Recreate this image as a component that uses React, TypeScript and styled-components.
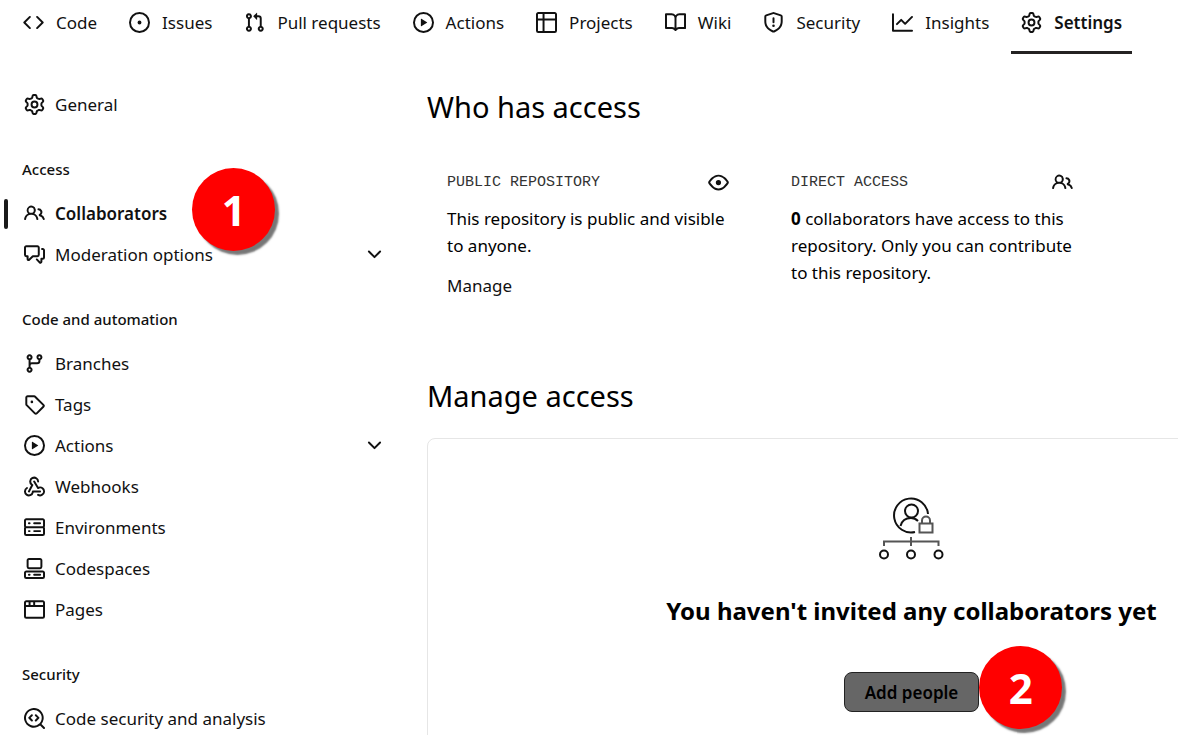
import React from "react";
import styled, { createGlobalStyle } from "styled-components";

const GlobalStyle = createGlobalStyle`
  *, *::before, *::after { box-sizing: border-box; }
  body {
    margin: 0;
    background: #ffffff;
    color: #111111;
    font-family: "Noto Sans", "Open Sans", sans-serif;
    font-size: 17px;
    line-height: 27px;
  }
  h2, h3, p, ul { margin: 0; padding: 0; }
  ul { list-style: none; }
  a { color: inherit; text-decoration: none; }
`;

const icons = {
  code: "m11.28 3.22 4.25 4.25a.75.75 0 0 1 0 1.06l-4.25 4.25a.749.749 0 0 1-1.275-.326.749.749 0 0 1 .215-.734L13.94 8l-3.72-3.72a.749.749 0 0 1 .326-1.275.749.749 0 0 1 .734.215Zm-6.56 0a.751.751 0 0 1 1.042.018.751.751 0 0 1 .018 1.042L2.06 8l3.72 3.72a.749.749 0 0 1-.326 1.275.749.749 0 0 1-.734-.215L.47 8.53a.75.75 0 0 1 0-1.06Z",
  issue: "M8 9.5a1.5 1.5 0 1 0 0-3 1.5 1.5 0 0 0 0 3ZM8 0a8 8 0 1 1 0 16A8 8 0 0 1 8 0ZM1.5 8a6.5 6.5 0 1 0 13 0 6.5 6.5 0 0 0-13 0Z",
  pull: "M1.5 3.25a2.25 2.25 0 1 1 3 2.122v5.256a2.251 2.251 0 1 1-1.5 0V5.372A2.25 2.25 0 0 1 1.5 3.25Zm5.677-.177L9.573.677A.25.25 0 0 1 10 .854V2.5h1A2.5 2.5 0 0 1 13.5 5v5.628a2.251 2.251 0 1 1-1.5 0V5a1 1 0 0 0-1-1h-1v1.646a.25.25 0 0 1-.427.177L7.177 3.427a.25.25 0 0 1 0-.354ZM3.75 2.5a.75.75 0 1 0 0 1.5.75.75 0 0 0 0-1.5Zm0 9.5a.75.75 0 1 0 0 1.5.75.75 0 0 0 0-1.5Zm8.25.75a.75.75 0 1 0 1.5 0 .75.75 0 0 0-1.5 0Z",
  play: "M8 0a8 8 0 1 1 0 16A8 8 0 0 1 8 0ZM1.5 8a6.5 6.5 0 1 0 13 0 6.5 6.5 0 0 0-13 0Zm4.879-2.773 4.264 2.559a.25.25 0 0 1 0 .428l-4.264 2.559A.25.25 0 0 1 6 10.559V5.442a.25.25 0 0 1 .379-.215Z",
  table: "M0 1.75C0 .784.784 0 1.75 0h12.5C15.216 0 16 .784 16 1.75v12.5A1.75 1.75 0 0 1 14.25 16H1.75A1.75 1.75 0 0 1 0 14.25ZM6.5 6.5v8h7.75a.25.25 0 0 0 .25-.25V6.5Zm8-1.5V1.75a.25.25 0 0 0-.25-.25H6.5V5Zm-13 1.5v7.75c0 .138.112.25.25.25H5v-8ZM5 5V1.5H1.75a.25.25 0 0 0-.25.25V5Z",
  book: "M0 1.75A.75.75 0 0 1 .75 1h4.253c1.227 0 2.317.59 3 1.501A3.743 3.743 0 0 1 11.006 1h4.245a.75.75 0 0 1 .75.75v10.5a.75.75 0 0 1-.75.75h-4.507a2.25 2.25 0 0 0-1.591.659l-.622.621a.75.75 0 0 1-1.06 0l-.622-.621A2.25 2.25 0 0 0 5.258 13H.75a.75.75 0 0 1-.75-.75Zm7.251 10.324.004-5.073-.002-2.253A2.25 2.25 0 0 0 5.003 2.5H1.5v9h3.757a3.75 3.75 0 0 1 1.994.574ZM8.755 4.75l-.004 7.322a3.752 3.752 0 0 1 1.992-.572H14.5v-9h-3.495a2.25 2.25 0 0 0-2.25 2.25Z",
  shield: "M7.467.133a1.748 1.748 0 0 1 1.066 0l5.25 1.68A1.75 1.75 0 0 1 15 3.48V7c0 1.566-.32 3.182-1.303 4.682-.983 1.498-2.585 2.813-5.032 3.855a1.697 1.697 0 0 1-1.33 0c-2.447-1.042-4.049-2.357-5.032-3.855C1.32 10.182 1 8.566 1 7V3.48a1.75 1.75 0 0 1 1.217-1.667Zm.61 1.429a.25.25 0 0 0-.153 0l-5.25 1.68a.25.25 0 0 0-.174.238V7c0 1.358.275 2.666 1.057 3.86.784 1.194 2.121 2.34 4.366 3.297a.196.196 0 0 0 .154 0c2.245-.956 3.582-2.104 4.366-3.298C13.225 9.666 13.5 8.36 13.5 7V3.48a.251.251 0 0 0-.174-.237l-5.25-1.68ZM8.75 4.75v3a.75.75 0 0 1-1.5 0v-3a.75.75 0 0 1 1.5 0ZM9 10.5a1 1 0 1 1-2 0 1 1 0 0 1 2 0Z",
  graph: "M1.5 1.75V13.5h13.75a.75.75 0 0 1 0 1.5H.75a.75.75 0 0 1-.75-.75V1.75a.75.75 0 0 1 1.5 0Zm14.28 2.53-5.25 5.25a.75.75 0 0 1-1.06 0L7 7.06 4.28 9.78a.751.751 0 0 1-1.042-.018.751.751 0 0 1-.018-1.042l3.25-3.25a.75.75 0 0 1 1.06 0L10 7.94l4.72-4.72a.751.751 0 0 1 1.042.018.751.751 0 0 1 .018 1.042Z",
  gear: "M8 0a8.2 8.2 0 0 1 .701.031C9.444.095 9.99.645 10.16 1.29l.288 1.107c.018.066.079.158.212.224.231.114.454.243.668.386.123.082.233.09.299.071l1.103-.303c.644-.176 1.392.021 1.82.63.27.385.506.792.704 1.218.315.675.111 1.422-.364 1.891l-.814.806c-.049.048-.098.147-.088.294.016.257.016.515 0 .772-.01.147.038.246.088.294l.814.806c.475.469.679 1.216.364 1.891a7.977 7.977 0 0 1-.704 1.217c-.428.61-1.176.807-1.82.63l-1.102-.302c-.067-.019-.177-.011-.3.071a5.909 5.909 0 0 1-.668.386c-.133.066-.194.158-.211.224l-.29 1.106c-.168.646-.715 1.196-1.458 1.26a8.006 8.006 0 0 1-1.402 0c-.743-.064-1.289-.614-1.458-1.26l-.289-1.106c-.018-.066-.079-.158-.212-.224a5.738 5.738 0 0 1-.668-.386c-.123-.082-.233-.09-.299-.071l-1.103.303c-.644.176-1.392-.021-1.82-.63a8.12 8.12 0 0 1-.704-1.218c-.315-.675-.111-1.422.363-1.891l.815-.806c.05-.048.098-.147.088-.294a6.214 6.214 0 0 1 0-.772c.01-.147-.038-.246-.088-.294l-.815-.806C.635 6.045.431 5.298.746 4.623a7.92 7.92 0 0 1 .704-1.217c.428-.61 1.176-.807 1.82-.63l1.102.302c.067.019.177.011.3-.071.214-.143.437-.272.668-.386.133-.066.194-.158.211-.224l.29-1.106C6.009.645 6.556.095 7.299.03 7.53.01 7.764 0 8 0Zm-.571 1.525c-.036.003-.108.036-.137.146l-.289 1.105c-.147.561-.549.967-.998 1.189-.173.086-.34.183-.5.29-.417.278-.97.423-1.529.27l-1.103-.303c-.109-.03-.175.016-.195.045-.22.312-.412.644-.573.99-.014.031-.021.11.059.19l.815.806c.411.406.562.957.53 1.456a4.709 4.709 0 0 0 0 .582c.032.499-.119 1.05-.53 1.456l-.815.806c-.081.08-.073.159-.059.19.162.346.353.677.573.989.02.03.085.076.195.046l1.102-.303c.56-.153 1.113-.008 1.53.27.161.107.328.204.501.29.447.222.85.629.997 1.189l.289 1.105c.029.109.101.143.137.146a6.6 6.6 0 0 0 1.142 0c.036-.003.108-.036.137-.146l.289-1.105c.147-.561.549-.967.998-1.189.173-.086.34-.183.5-.29.417-.278.97-.423 1.529-.27l1.103.303c.109.029.175-.016.195-.045.22-.313.411-.644.573-.99.014-.031.021-.11-.059-.19l-.815-.806c-.411-.406-.562-.957-.53-1.456a4.709 4.709 0 0 0 0-.582c-.032-.499.119-1.05.53-1.456l.815-.806c.081-.08.073-.159.059-.19a6.464 6.464 0 0 0-.573-.989c-.02-.03-.085-.076-.195-.046l-1.102.303c-.56.153-1.113.008-1.53-.27a4.44 4.44 0 0 0-.501-.29c-.447-.222-.85-.629-.997-1.189l-.289-1.105c-.029-.11-.101-.143-.137-.146a6.6 6.6 0 0 0-1.142 0ZM11 8a3 3 0 1 1-6 0 3 3 0 0 1 6 0ZM9.5 8a1.5 1.5 0 1 0-3.001.001A1.5 1.5 0 0 0 9.5 8Z",
  people: "M2 5.5a3.5 3.5 0 1 1 5.898 2.549 5.508 5.508 0 0 1 3.034 4.084.75.75 0 1 1-1.482.235 4 4 0 0 0-7.9 0 .75.75 0 0 1-1.482-.236A5.507 5.507 0 0 1 3.102 8.05 3.493 3.493 0 0 1 2 5.5ZM11 4a3.001 3.001 0 0 1 2.22 5.018 5.01 5.01 0 0 1 2.56 3.012.749.749 0 0 1-.885.954.752.752 0 0 1-.549-.514 3.507 3.507 0 0 0-2.522-2.372.75.75 0 0 1-.574-.73v-.352a.75.75 0 0 1 .416-.672A1.5 1.5 0 0 0 11 5.5.75.75 0 0 1 11 4Zm-5.5-.5a2 2 0 1 0-.001 3.999A2 2 0 0 0 5.5 3.5Z",
  discussion: "M1.75 1h8.5c.966 0 1.75.784 1.75 1.75v5.5A1.75 1.75 0 0 1 10.25 10H7.061l-2.574 2.573A1.458 1.458 0 0 1 2 11.543V10h-.25A1.75 1.75 0 0 1 0 8.25v-5.5C0 1.784.784 1 1.75 1ZM1.5 2.75v5.5c0 .138.112.25.25.25h1a.75.75 0 0 1 .75.75v2.19l2.72-2.72a.749.749 0 0 1 .53-.22h3.5a.25.25 0 0 0 .25-.25v-5.5a.25.25 0 0 0-.25-.25h-8.5a.25.25 0 0 0-.25.25Zm13 2a.25.25 0 0 0-.25-.25h-.5a.75.75 0 0 1 0-1.5h.5c.966 0 1.75.784 1.75 1.75v5.5A1.75 1.75 0 0 1 14.25 12H14v1.543a1.458 1.458 0 0 1-2.487 1.03L9.22 12.28a.749.749 0 0 1 .326-1.275.749.749 0 0 1 .734.215l2.22 2.22v-2.19a.75.75 0 0 1 .75-.75h1a.25.25 0 0 0 .25-.25Z",
  branch: "M9.5 3.25a2.25 2.25 0 1 1 3 2.122V6A2.5 2.5 0 0 1 10 8.5H6a1 1 0 0 0-1 1v1.128a2.251 2.251 0 1 1-1.5 0V5.372a2.25 2.25 0 1 1 1.5 0v1.836A2.493 2.493 0 0 1 6 7h4a1 1 0 0 0 1-1v-.628A2.25 2.25 0 0 1 9.5 3.25Zm-6 0a.75.75 0 1 0 1.5 0 .75.75 0 0 0-1.5 0Zm8.25-.75a.75.75 0 1 0 0 1.5.75.75 0 0 0 0-1.5ZM4.25 12a.75.75 0 1 0 0 1.5.75.75 0 0 0 0-1.5Z",
  tag: "M1 7.775V2.75C1 1.784 1.784 1 2.75 1h5.025c.464 0 .91.184 1.238.513l6.25 6.25a1.75 1.75 0 0 1 0 2.474l-5.026 5.026a1.75 1.75 0 0 1-2.474 0l-6.25-6.25A1.752 1.752 0 0 1 1 7.775Zm1.5 0c0 .066.026.13.073.177l6.25 6.25a.25.25 0 0 0 .354 0l5.025-5.025a.25.25 0 0 0 0-.354l-6.25-6.25a.25.25 0 0 0-.177-.073H2.75a.25.25 0 0 0-.25.25ZM6 5a1 1 0 1 1 0 2 1 1 0 0 1 0-2Z",
  webhook: "M5.5 4.25a2.25 2.25 0 0 1 4.5 0 .75.75 0 0 0 1.5 0 3.75 3.75 0 1 0-6.14 2.889l-2.272 4.258a.75.75 0 0 0 1.324.706L7 7.25a.75.75 0 0 0-.309-1.015A2.25 2.25 0 0 1 5.5 4.25ZM7.364 3.607a.75.75 0 0 1 1.03.257l2.608 4.349a3.75 3.75 0 1 1-.628 6.785.75.75 0 0 1 .752-1.299 2.25 2.25 0 1 0-.033-3.88.75.75 0 0 1-1.03-.256L7.107 4.636a.75.75 0 0 1 .257-1.03ZM2.9 8.776A.75.75 0 0 1 2.625 9.8 2.25 2.25 0 1 0 6 11.75a.75.75 0 0 1 .75-.751h5.5a.75.75 0 0 1 0 1.5H7.425a3.751 3.751 0 1 1-5.55-3.998.75.75 0 0 1 1.024.274Z",
  server: "M1.75 1h12.5c.966 0 1.75.784 1.75 1.75v4c0 .372-.116.717-.314 1 .198.283.314.628.314 1v4a1.75 1.75 0 0 1-1.75 1.75H1.75A1.75 1.75 0 0 1 0 12.75v-4c0-.358.109-.707.314-1a1.739 1.739 0 0 1-.314-1v-4C0 1.784.784 1 1.75 1ZM1.5 2.75v4c0 .138.112.25.25.25h12.5a.25.25 0 0 0 .25-.25v-4a.25.25 0 0 0-.25-.25H1.75a.25.25 0 0 0-.25.25Zm.25 5.75a.25.25 0 0 0-.25.25v4c0 .138.112.25.25.25h12.5a.25.25 0 0 0 .25-.25v-4a.25.25 0 0 0-.25-.25ZM7 4.75A.75.75 0 0 1 7.75 4h4.5a.75.75 0 0 1 0 1.5h-4.5A.75.75 0 0 1 7 4.75ZM7.75 10h4.5a.75.75 0 0 1 0 1.5h-4.5a.75.75 0 0 1 0-1.5ZM3 4.75A.75.75 0 0 1 3.75 4h.5a.75.75 0 0 1 0 1.5h-.5A.75.75 0 0 1 3 4.75ZM3.75 10h.5a.75.75 0 0 1 0 1.5h-.5a.75.75 0 0 1 0-1.5Z",
  codespaces: "M0 11.25c0-.966.784-1.75 1.75-1.75h12.5c.966 0 1.75.784 1.75 1.75v3A1.75 1.75 0 0 1 14.25 16H1.75A1.75 1.75 0 0 1 0 14.25Zm2-9.5C2 .784 2.784 0 3.75 0h8.5C13.216 0 14 .784 14 1.75v5a1.75 1.75 0 0 1-1.75 1.75h-8.5A1.75 1.75 0 0 1 2 6.75Zm1.75-.25a.25.25 0 0 0-.25.25v5c0 .138.112.25.25.25h8.5a.25.25 0 0 0 .25-.25v-5a.25.25 0 0 0-.25-.25Zm-2 9.5a.25.25 0 0 0-.25.25v3c0 .138.112.25.25.25h12.5a.25.25 0 0 0 .25-.25v-3a.25.25 0 0 0-.25-.25ZM7 12.75a.75.75 0 0 1 .75-.75h4.5a.75.75 0 0 1 0 1.5h-4.5a.75.75 0 0 1-.75-.75Zm-4 0a.75.75 0 0 1 .75-.75h.5a.75.75 0 0 1 0 1.5h-.5a.75.75 0 0 1-.75-.75Z",
  browser: "M0 2.75C0 1.784.784 1 1.75 1h12.5c.966 0 1.75.784 1.75 1.75v10.5A1.75 1.75 0 0 1 14.25 15H1.75A1.75 1.75 0 0 1 0 13.25ZM14.5 6h-13v7.25c0 .138.112.25.25.25h12.5a.25.25 0 0 0 .25-.25Zm-6-3.5v2h6V2.75a.25.25 0 0 0-.25-.25ZM5 2.5v2h2v-2Zm-3.25 0a.25.25 0 0 0-.25.25V4.5h2v-2Z",
  codescan: "M8.47 4.97a.75.75 0 0 0 0 1.06L9.94 7.5 8.47 8.97a.75.75 0 1 0 1.06 1.06l2-2a.75.75 0 0 0 0-1.06l-2-2a.75.75 0 0 0-1.06 0ZM6.53 6.03a.75.75 0 0 0-1.06-1.06l-2 2a.75.75 0 0 0 0 1.06l2 2a.75.75 0 1 0 1.06-1.06L5.06 7.5l1.47-1.47ZM12.246 13.307a7.501 7.501 0 1 1 1.06-1.06l2.474 2.473a.749.749 0 0 1-.326 1.275.749.749 0 0 1-.734-.215ZM1.5 7.5a6.002 6.002 0 0 0 3.608 5.504 6.002 6.002 0 0 0 6.486-1.117.748.748 0 0 1 .292-.293A6 6 0 1 0 1.5 7.5Z",
  chevron: "M12.78 5.22a.749.749 0 0 1 0 1.06l-4.25 4.25a.749.749 0 0 1-1.06 0L3.22 6.28a.749.749 0 1 1 1.06-1.06L8 8.939l3.72-3.719a.749.749 0 0 1 1.06 0Z",
  eye: "M8 2c1.981 0 3.671.992 4.933 2.078 1.27 1.091 2.187 2.345 2.637 3.023a1.62 1.62 0 0 1 0 1.798c-.45.678-1.367 1.932-2.637 3.023C11.67 13.008 9.981 14 8 14c-1.981 0-3.671-.992-4.933-2.078C1.797 10.83.88 9.576.43 8.898a1.62 1.62 0 0 1 0-1.798c.45-.677 1.367-1.931 2.637-3.022C4.33 2.992 6.019 2 8 2ZM1.679 7.932a.12.12 0 0 0 0 .136c.411.622 1.241 1.75 2.366 2.717C5.176 11.758 6.527 12.5 8 12.5c1.473 0 2.825-.742 3.955-1.715 1.124-.967 1.954-2.096 2.366-2.717a.12.12 0 0 0 0-.136c-.412-.621-1.242-1.75-2.366-2.717C10.824 4.242 9.473 3.5 8 3.5c-1.473 0-2.825.742-3.955 1.715-1.124.967-1.954 2.096-2.366 2.717ZM8 10a2 2 0 1 1-.001-3.999A2 2 0 0 1 8 10Z",
};

type IconName = keyof typeof icons;

const IconSvg = styled.svg`
  flex: none;
  width: 21px;
  height: 21px;
  fill: currentColor;
`;

const Icon = ({ name }: { name: IconName }) => (
  <IconSvg viewBox="0 0 16 16" aria-hidden="true">
    <path d={icons[name]} />
  </IconSvg>
);

const Page = styled.div`
  height: 100vh;
  overflow: hidden;
`;

const TabBar = styled.nav`
  display: flex;
  gap: 12px;
  padding-left: 13px;
`;

const Tab = styled.a<{ $active?: boolean }>`
  display: flex;
  flex: none;
  align-items: center;
  gap: 12px;
  height: 54px;
  padding: 0 10px 7px;
  border-bottom: 3px solid ${(p) => (p.$active ? "#242222" : "transparent")};
  font-weight: ${(p) => (p.$active ? 600 : 400)};
  white-space: nowrap;
`;

const Columns = styled.div`
  display: flex;
  align-items: flex-start;
  gap: 32px;
  padding-top: 30px;
`;

const Sidebar = styled.nav`
  flex: none;
  width: 395px;
  padding-left: 4px;
`;

const Group = styled.section`
  margin-top: 27px;
`;

const GroupTitle = styled.h3`
  height: 41px;
  padding-left: 18px;
  font-size: 15px;
  font-weight: 500;
  line-height: 34px;
`;

const NavItem = styled.li`
  position: relative;
`;

const NavLink = styled.a<{ $active?: boolean }>`
  display: flex;
  align-items: center;
  gap: 10px;
  height: 41px;
  padding: 0 10px 0 20px;
  font-weight: ${(p) => (p.$active ? 600 : 400)};
  white-space: nowrap;

  &::before {
    content: "";
    position: absolute;
    left: 0;
    width: 4px;
    height: 30px;
    border-radius: 2px;
    background: ${(p) => (p.$active ? "#1a1a1a" : "transparent")};
  }
`;

const Grow = styled.span`
  flex: 1;
`;

const StepBadge = styled.span`
  position: absolute;
  z-index: 1;
  left: 100%;
  top: 50%;
  display: flex;
  align-items: center;
  justify-content: center;
  width: 83px;
  height: 83px;
  margin-top: -46px;
  border-radius: 50%;
  background: #ff0000;
  box-shadow: 4px 4px 2px #777777;
  color: #ffffff;
  font-family: "Open Sans", "Noto Sans", sans-serif;
  font-size: 42px;
  font-weight: 700;
`;

const BadgeAnchor = styled.span<{ $offset: number }>`
  position: relative;
  padding-right: ${(p) => p.$offset}px;
`;

const Main = styled.main`
  flex: 1 0 auto;
  width: 969px;
  padding-top: 1px;
`;

const Title = styled.h2`
  font-size: 29px;
  font-weight: 400;
  line-height: 44px;
  color: #000000;
`;

const Cards = styled.div`
  display: flex;
  gap: 22px;
  padding: 40px 0 75px;
`;

const Card = styled.section`
  display: flex;
  flex-direction: column;
  gap: 10px;
  width: 322px;
  padding: 0 20px;
`;

const CardHead = styled.div`
  display: flex;
  align-items: center;
  justify-content: space-between;
  height: 26px;
`;

const CardLabel = styled.h3`
  font-family: "Liberation Mono", monospace;
  font-size: 15px;
  font-weight: 400;
  color: #333333;
`;

const CardText = styled.p`
  color: #000000;
`;

const CardLink = styled.a`
  margin-top: 3px;
`;

const Blank = styled.section`
  display: flex;
  flex-direction: column;
  align-items: center;
  height: 400px;
  margin-top: 20px;
  padding-top: 57px;
  border: 1px solid #e6e6e6;
  border-radius: 8px;
`;

const BlankTitle = styled.h3`
  margin: 31px 0 43px;
  font-size: 24px;
  font-weight: 700;
  line-height: 36px;
  color: #000000;
`;

const AddButton = styled.button`
  height: 40px;
  padding: 0 20px;
  border: 1px solid #222222;
  border-radius: 8px;
  background: #666666;
  color: #000000;
  font-family: inherit;
  font-size: 17px;
  font-weight: 600;
`;

const tabs: { icon: IconName; label: string }[] = [
  { icon: "code", label: "Code" },
  { icon: "issue", label: "Issues" },
  { icon: "pull", label: "Pull requests" },
  { icon: "play", label: "Actions" },
  { icon: "table", label: "Projects" },
  { icon: "book", label: "Wiki" },
  { icon: "shield", label: "Security" },
  { icon: "graph", label: "Insights" },
  { icon: "gear", label: "Settings" },
];

type Item = { icon: IconName; label: string; expands?: boolean; step?: number };

const groups: { title: string; items: Item[] }[] = [
  {
    title: "Access",
    items: [
      { icon: "people", label: "Collaborators", step: 1 },
      { icon: "discussion", label: "Moderation options", expands: true },
    ],
  },
  {
    title: "Code and automation",
    items: [
      { icon: "branch", label: "Branches" },
      { icon: "tag", label: "Tags" },
      { icon: "play", label: "Actions", expands: true },
      { icon: "webhook", label: "Webhooks" },
      { icon: "server", label: "Environments" },
      { icon: "codespaces", label: "Codespaces" },
      { icon: "browser", label: "Pages" },
    ],
  },
  {
    title: "Security",
    items: [{ icon: "codescan", label: "Code security and analysis" }],
  },
];

const SideItem = ({ icon, label, expands, step }: Item) => (
  <NavItem>
    <NavLink href="#" $active={step !== undefined}>
      <Icon name={icon} />
      <BadgeAnchor $offset={step ? 25 : 0}>
        {label}
        {step && <StepBadge>{step}</StepBadge>}
      </BadgeAnchor>
      {expands && (
        <>
          <Grow />
          <Icon name="chevron" />
        </>
      )}
    </NavLink>
  </NavItem>
);

const TeamDrawing = () => (
  <svg width="68" height="66" viewBox="18 15 68 66" fill="none" stroke="#111111" strokeWidth="2" aria-hidden="true">
    <path d="M68 33A17 17 0 1 0 55 51" />
    <circle cx="51.500" cy="30" r="6.500" />
    <path d="M40.500 45C42 39 46 37 51 37C54 37 56 38 58 40" />
    <g stroke="#555555">
      <path d="M59.500 42.500h13v9h-13zM62 42v-2.500a4 4 0 0 1 8 0V42" />
      <path d="M51 56v9M24 65v-4.500h54.500V65" />
    </g>
    <circle cx="24" cy="73.500" r="4" />
    <circle cx="51" cy="73.500" r="4" />
    <circle cx="78.500" cy="73.500" r="4" />
  </svg>
);

export default function App() {
  return (
    <>
      <GlobalStyle />
      <Page>
        <TabBar aria-label="Repository">
          {tabs.map((t) => (
            <Tab key={t.label} href="#" $active={t.label === "Settings"}>
              <Icon name={t.icon} />
              {t.label}
            </Tab>
          ))}
        </TabBar>
        <Columns>
          <Sidebar aria-label="Settings">
            <ul>
              <SideItem icon="gear" label="General" />
            </ul>
            {groups.map((g) => (
              <Group key={g.title}>
                <GroupTitle>{g.title}</GroupTitle>
                <ul>
                  {g.items.map((i) => (
                    <SideItem key={i.label} {...i} />
                  ))}
                </ul>
              </Group>
            ))}
          </Sidebar>
          <Main>
            <Title>Who has access</Title>
            <Cards>
              <Card>
                <CardHead>
                  <CardLabel>PUBLIC REPOSITORY</CardLabel>
                  <Icon name="eye" />
                </CardHead>
                <CardText>This repository is public and visible to anyone.</CardText>
                <CardLink href="#">Manage</CardLink>
              </Card>
              <Card>
                <CardHead>
                  <CardLabel>DIRECT ACCESS</CardLabel>
                  <Icon name="people" />
                </CardHead>
                <CardText>
                  <strong>0</strong> collaborators have access to this repository. Only you can contribute to this
                  repository.
                </CardText>
              </Card>
            </Cards>
            <Title>Manage access</Title>
            <Blank>
              <TeamDrawing />
              <BlankTitle>You haven't invited any collaborators yet</BlankTitle>
              <BadgeAnchor $offset={0}>
                <AddButton type="button">Add people</AddButton>
                <StepBadge>2</StepBadge>
              </BadgeAnchor>
            </Blank>
          </Main>
        </Columns>
      </Page>
    </>
  );
}
